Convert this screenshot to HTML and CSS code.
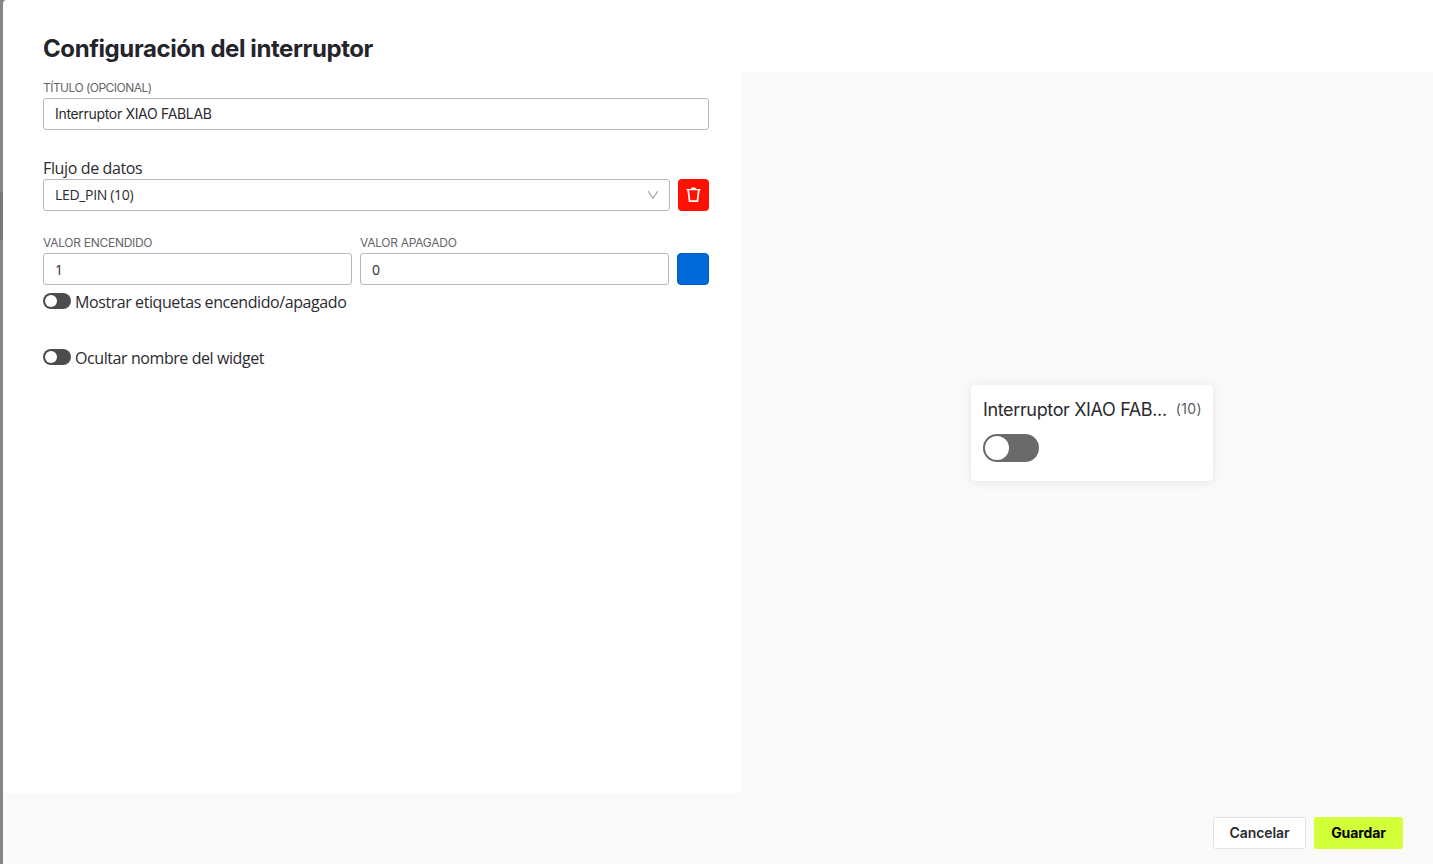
FILE: index.html
```html
<!DOCTYPE html>
<html lang="es">
<head>
  <meta charset="UTF-8">
  <meta name="viewport" content="width=device-width, initial-scale=1.0">
  <title>Configuración del interruptor</title>
  <link rel="stylesheet" href="styles.css">
</head>
<body>
  <div class="modal">
    <div class="modal-body">
      <div class="settings">
        <h2>Configuración del interruptor</h2>

        <label class="caption" for="titulo">TÍTULO (OPCIONAL)</label>
        <input class="field grotesk" type="text" id="titulo" value="Interruptor XIAO FABLAB">

        <div class="stream-label">Flujo de datos</div>
        <div class="row stream">
          <div class="field select">
            <span>LED_PIN (10)</span>
            <svg width="12" height="12" viewBox="0 0 12 12"><path d="M1.2 2.2 6 9.2 10.8 2.2" fill="none" stroke="#999" stroke-width="1.1"/></svg>
          </div>
          <button class="delete" aria-label="Eliminar">
            <svg width="15" height="16" viewBox="0 0 15 16"><path d="M0.5 2H4.6Q5.2 0.4 6 0.4H9Q9.8 0.4 10.4 2H14.5V3.3H0.5Z" fill="#fff"/><path d="M2.2 3 3.6 14.2H11.4L12.8 3" fill="none" stroke="#fff" stroke-width="1.8"/></svg>
          </button>
        </div>

        <div class="row values">
          <div class="value">
            <label class="caption" for="encendido">VALOR ENCENDIDO</label>
            <input class="field" type="text" id="encendido" value="1">
          </div>
          <div class="value">
            <label class="caption" for="apagado">VALOR APAGADO</label>
            <input class="field" type="text" id="apagado" value="0">
          </div>
          <button class="color" aria-label="Color"></button>
        </div>

        <div class="option"><span class="switch"></span><span>Mostrar etiquetas encendido/apagado</span></div>
        <div class="option hide-name"><span class="switch"></span><span>Ocultar nombre del widget</span></div>
      </div>

      <div class="preview">
        <div class="widget">
          <div class="widget-head">
            <span class="widget-name">Interruptor XIAO FAB...</span>
            <span class="widget-pin">(10)</span>
          </div>
          <span class="switch large"></span>
        </div>
      </div>
    </div>

    <div class="modal-footer">
      <button class="btn cancel">Cancelar</button>
      <button class="btn save">Guardar</button>
    </div>
  </div>
</body>
</html>
```

FILE: styles.css
```css
* {
  box-sizing: border-box;
}
body {
  margin: 0;
  height: 864px;
  padding-left: 3px;
  overflow: hidden;
  font-family: 'Open Sans', 'Noto Sans', sans-serif;
  color: #2b2b30;
  background: linear-gradient(#868686 192px, #78787a 192px, #78787a 240px, #868686 240px);
}
.modal {
  height: 864px;
  display: flex;
  flex-direction: column;
  background: #fff;
  border-top-left-radius: 4px;
}
.modal-body {
  height: 793px;
  display: flex;
}
.settings {
  width: 738px;
  padding: 34px 32px 0 40px;
}
h2 {
  margin: 0;
  font: 700 24px/30px Inter, sans-serif;
  letter-spacing: -0.41px;
  color: #24242a;
}
.caption {
  display: block;
  font: 12px/16px Inter, sans-serif;
  letter-spacing: -0.53px;
  color: #66666a;
}
h2 + .caption {
  margin-top: 16px;
  margin-bottom: 2px;
}
.field {
  display: block;
  width: 100%;
  height: 32px;
  padding: 0 11px;
  border: 1px solid #b8b8b8;
  border-radius: 3px;
  background: #fff;
  font: 14px 'Open Sans', 'Noto Sans', sans-serif;
  letter-spacing: -0.33px;
  color: #2b2b30;
}
.grotesk {
  padding-bottom: 2px;
  font: 14px Inter, sans-serif;
  letter-spacing: -0.32px;
}
.stream-label {
  margin-top: 26px;
  padding-top: 1px;
  font-size: 16px;
  line-height: 22px;
  letter-spacing: -0.37px;
}
.row {
  display: flex;
  gap: 8px;
}
.select {
  display: flex;
  flex: 1;
  align-items: center;
  justify-content: space-between;
  padding-right: 10px;
}
.select span {
  padding-bottom: 2px;
}
button {
  padding: 0;
  border: none;
  border-radius: 4px;
}
.delete {
  display: flex;
  width: 31px;
  height: 32px;
  align-items: center;
  justify-content: center;
  background: #ff1000;
}
.values {
  margin-top: 24px;
  align-items: flex-end;
}
.value {
  flex: 1;
}
.value .caption {
  letter-spacing: -0.28px;
}
.value .field {
  margin-top: 2px;
  padding-top: 1px;
}
.color {
  width: 32px;
  height: 32px;
  border: 1px solid #005cc4;
  background: #0069d9;
}
.option {
  display: flex;
  align-items: center;
  gap: 4px;
  margin-top: 5px;
  height: 22px;
  font-size: 16px;
  letter-spacing: -0.42px;
}
.hide-name {
  margin-top: 34px;
}
.switch {
  width: 28px;
  height: 16px;
  padding: 2px;
  border-radius: 8px;
  background: #4b4b50;
}
.switch + span {
  padding-top: 1px;
}
.switch::before {
  content: "";
  display: block;
  width: 12px;
  height: 12px;
  border-radius: 50%;
  background: #fff;
}
.preview {
  flex: 1;
  display: flex;
  margin-top: 72px;
  align-items: center;
  justify-content: center;
  background: #fafafa;
}
.widget {
  width: 242px;
  height: 96px;
  margin-left: 10px;
  padding: 12px;
  border-radius: 4px;
  background: #fff;
  box-shadow: 0 1px 12px rgba(0, 0, 0, 0.09);
}
.widget-head {
  display: flex;
  justify-content: space-between;
  height: 26px;
  white-space: nowrap;
  font-family: Inter, sans-serif;
}
.widget-name {
  font-size: 18px;
  line-height: 26px;
  letter-spacing: -0.36px;
}
.widget-pin {
  margin-right: -1px;
  font-size: 14px;
  line-height: 24px;
  letter-spacing: 0.4px;
  color: #5a5a5e;
}
.switch.large {
  display: block;
  width: 56px;
  height: 28px;
  margin-top: 11px;
  border-radius: 14px;
  background: #6a6a6a;
}
.switch.large::before {
  width: 24px;
  height: 24px;
}
.modal-footer {
  flex: 1;
  display: flex;
  gap: 8px;
  justify-content: flex-end;
  padding: 24px 30px 0 0;
  background: #fafafa;
}
.btn {
  height: 32px;
  padding-bottom: 2px;
  border-radius: 3px;
  font: 600 14px Inter, sans-serif;
  letter-spacing: -0.1px;
}
.cancel {
  width: 93px;
  border: 1px solid #e2e2e4;
  background: #fff;
  color: #2b2b30;
}
.save {
  width: 89px;
  background: #d1ff38;
  font-weight: 700;
  color: #000;
}
```
